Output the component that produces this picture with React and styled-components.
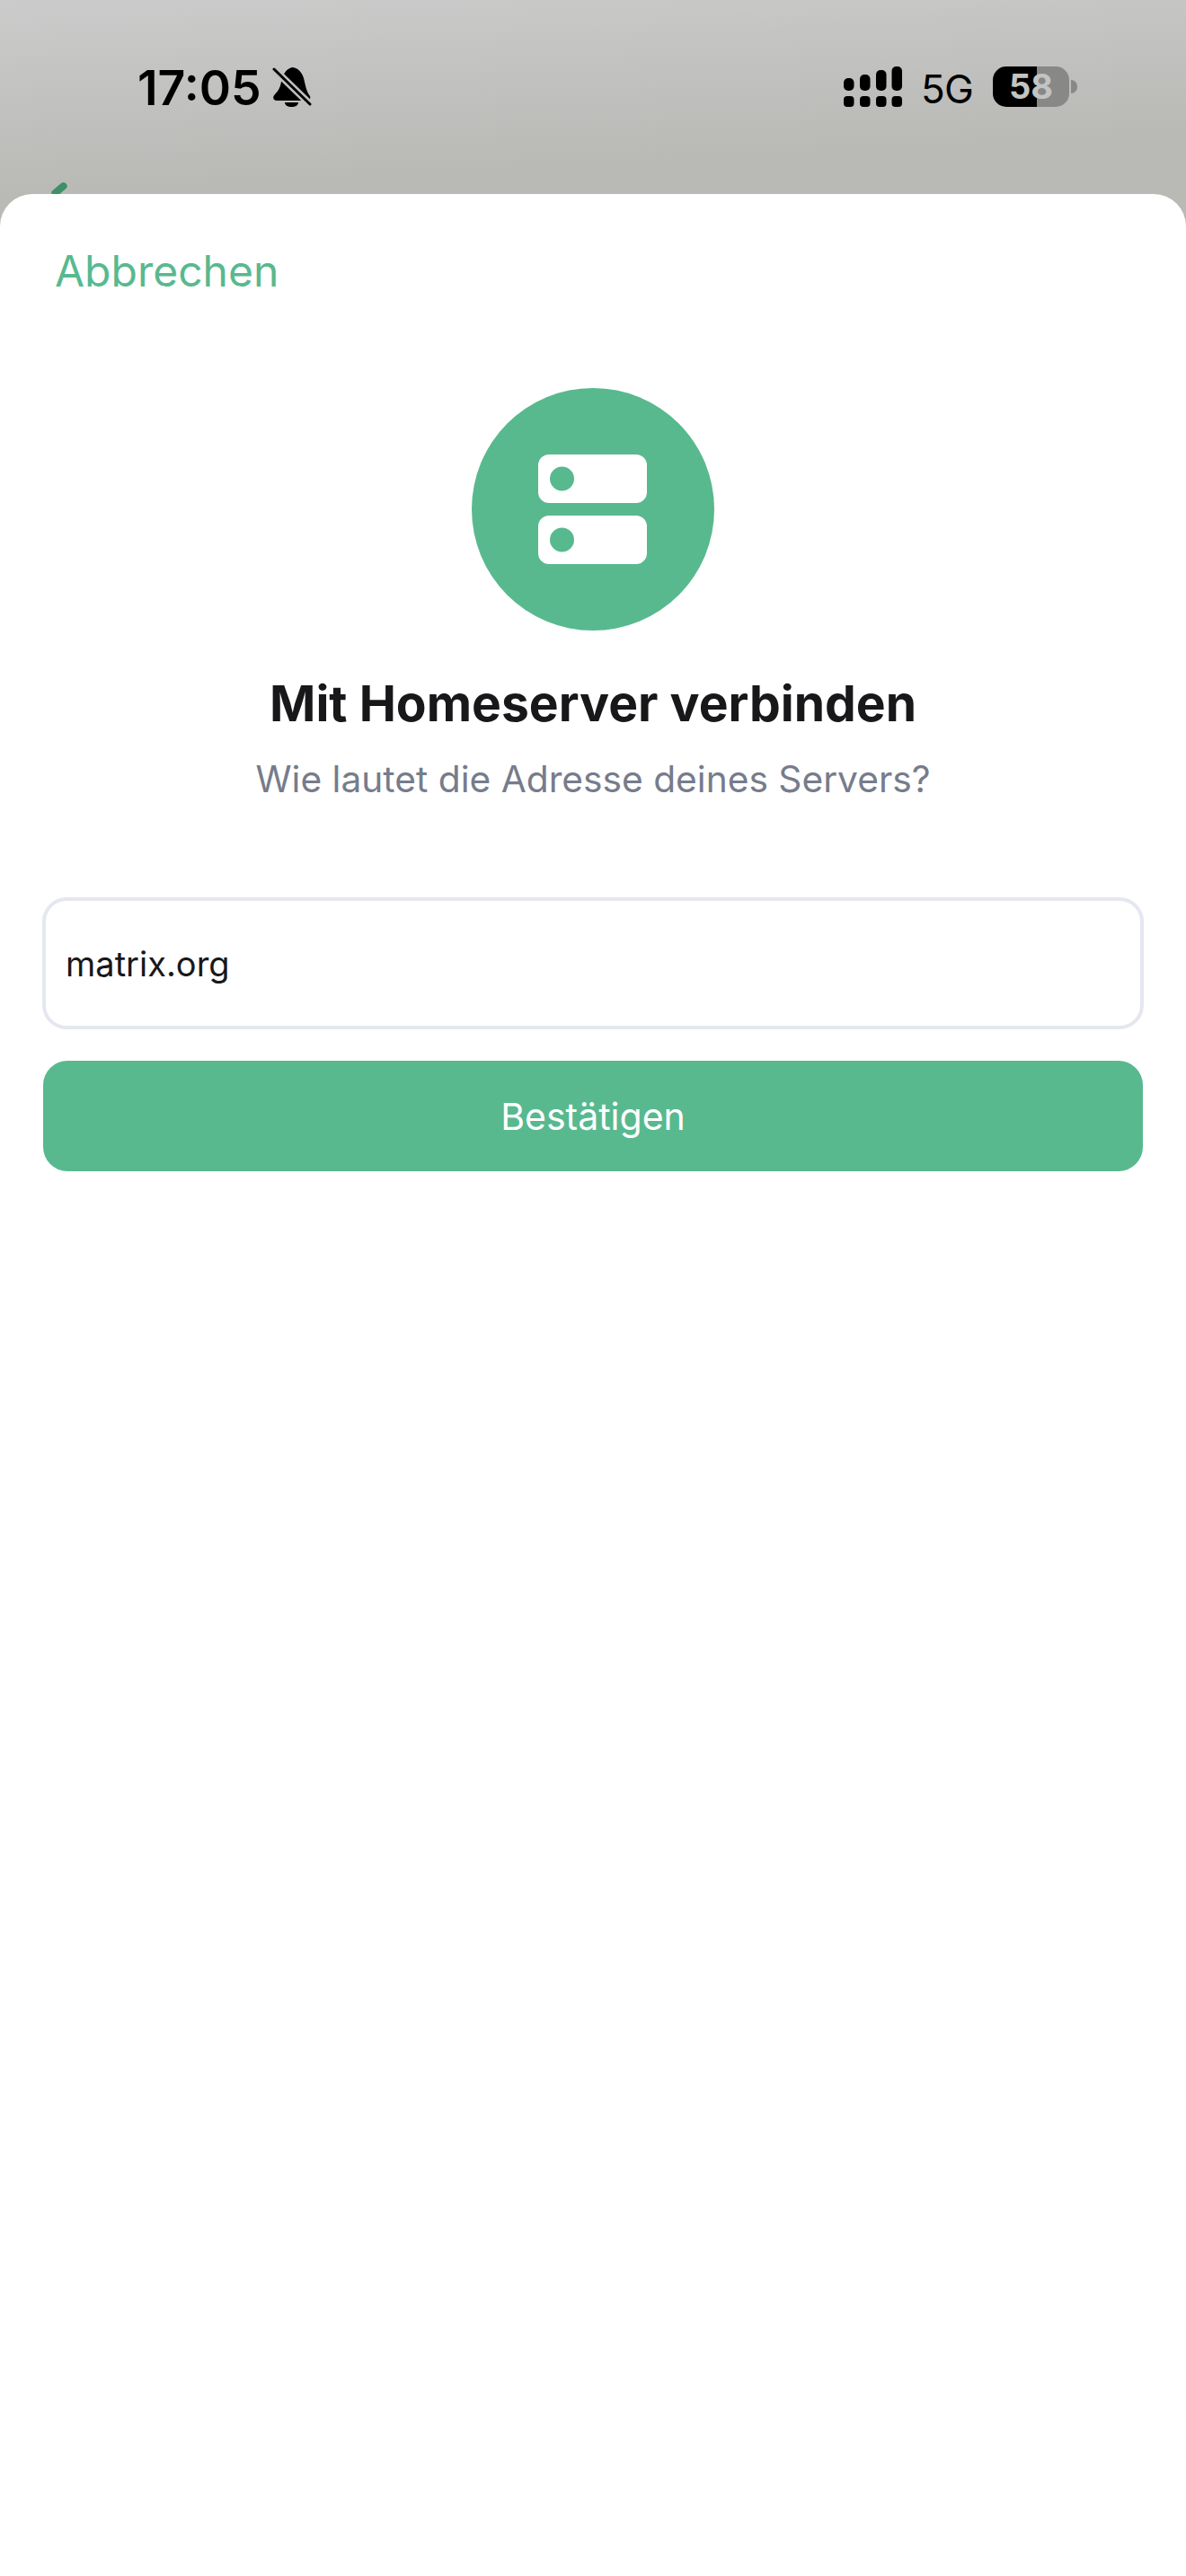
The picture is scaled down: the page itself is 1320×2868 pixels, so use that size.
import styled, { createGlobalStyle } from 'styled-components';

const GlobalStyle = createGlobalStyle`
    html, body {
        margin: 0;
        padding: 0;
        background: #fff;
    }

    * {
        box-sizing: border-box;
    }
`;

const Page = styled.div`
    height: 100vh;
    display: flex;
    flex-direction: column;
    overflow: hidden;
    font-family: Inter, "Liberation Sans", sans-serif;
    background: linear-gradient(177deg, #cbcbcb 0, #b9bab6 216px);
`;

const StatusBar = styled.header`
    position: relative;
    flex: 0 0 216px;
    height: 216px;
    padding: 74px 121px 0 153px;
    display: flex;
    align-items: flex-start;
    justify-content: space-between;
    overflow: hidden;
`;

const TimeGroup = styled.div`
    display: flex;
    align-items: flex-start;
    gap: 12px;
`;

const Time = styled.span`
    font-size: 53.5px;
    font-weight: 600;
    line-height: 48px;
    color: #000;
`;

const Indicators = styled.div`
    display: flex;
    align-items: flex-start;
`;

const Network = styled.span`
    margin: 3px 22px 0 21px;
    font-size: 44px;
    font-weight: 400;
    line-height: 44px;
    letter-spacing: -0.8px;
    color: #000;
`;

const Battery = styled.div`
    position: relative;
    width: 85px;
    height: 45px;
    border-radius: 15px;
    overflow: hidden;
    display: flex;
    align-items: center;
    justify-content: center;
    background: linear-gradient(90deg, #000 0 49px, #888887 49px);
`;

const BatteryLevel = styled.span`
    font-size: 38px;
    font-weight: 700;
    line-height: 45px;
    color: #c3c4c2;
`;

const BatteryCap = styled.span`
    width: 7px;
    height: 15px;
    margin: 15px 0 0 2px;
    border-radius: 0 8px 8px 0;
    background: #888887;
`;

const BackTick = styled.span`
    position: absolute;
    left: 56px;
    top: 207px;
    width: 20px;
    height: 8px;
    border-radius: 4px;
    transform: rotate(-40deg);
    background: #3f8f68;
`;

const Sheet = styled.main`
    flex: 1;
    display: flex;
    flex-direction: column;
    padding: 0 47px;
    background: #fff;
    border-radius: 36px 36px 0 0;
`;

const CancelLink = styled.a`
    align-self: flex-start;
    margin: 56px 0 0 14px;
    font-size: 48px;
    font-weight: 400;
    line-height: 60px;
    color: #58b98f;
`;

const Intro = styled.section`
    display: flex;
    flex-direction: column;
    align-items: center;
`;

const IconCircle = styled.div`
    width: 270px;
    height: 270px;
    margin-top: 100px;
    border-radius: 50%;
    display: flex;
    align-items: center;
    justify-content: center;
    background: #58b98f;
`;

const Title = styled.h1`
    margin: 47px 0 0;
    font-size: 55.2px;
    font-weight: 700;
    line-height: 68px;
    color: #18181b;
`;

const Subtitle = styled.p`
    margin: 26px 0 0;
    font-size: 40.7px;
    font-weight: 400;
    line-height: 50px;
    color: #767c8b;
`;

const ServerForm = styled.form`
    display: flex;
    flex-direction: column;
    align-items: stretch;
    gap: 35px;
    margin-top: 106px;
`;

const AddressInput = styled.input`
    height: 147px;
    padding: 0 22px;
    border: 4px solid #e5e7f0;
    border-radius: 27px;
    outline: none;
    background: #fff;
    font-family: inherit;
    font-size: 38px;
    color: #18181b;
`;

const SubmitButton = styled.button`
    height: 123px;
    margin: 0 1px;
    border: none;
    border-radius: 27px;
    background: #58b98f;
    font-family: inherit;
    font-size: 41px;
    font-weight: 400;
    color: #fff;
`;

const BellOff = () => (
    <svg width="44" height="46" viewBox="0 0 44 46">
        <path fill="#000" d="M22 1C28 1 33 6 35 13C37 21 38 28 42 33C43 36 41 38 39 38L5 38C1 38 0 34 3 31C7 27 9 23 10 17C11 10 15 3 22 1Z" />
        <path fill="#000" d="M14 40L29 40C29 43 26 45 21.500 45C17 45 14 43 14 40Z" />
        <path stroke="#c1c1bf" strokeWidth="8" d="M2 3L42 42" />
        <path stroke="#000" strokeWidth="3" strokeLinecap="round" d="M2 3L42 42" />
    </svg>
);

const SignalBars = () => (
    <svg width="65" height="46" viewBox="0 0 65 46" fill="#000">
        <rect x="0" y="13" width="11.500" height="14" rx="5" />
        <rect x="18" y="9" width="11.500" height="18" rx="5" />
        <rect x="36" y="4" width="11.500" height="23" rx="5" />
        <rect x="53.500" y="0" width="11.500" height="27" rx="5" />
        <rect x="0" y="33" width="11.500" height="12" rx="4" />
        <rect x="18" y="33" width="11.500" height="12" rx="4" />
        <rect x="36" y="33" width="11.500" height="12" rx="4" />
        <rect x="53.500" y="33" width="11.500" height="12" rx="4" />
    </svg>
);

const ServerIcon = () => (
    <svg width="122" height="122" viewBox="0 0 122 122">
        <path
            fill="#fff"
            fillRule="evenodd"
            d="M12 0H109A12 12 0 0 1 121 12V42A12 12 0 0 1 109 54H12A12 12 0 0 1 0 42V12A12 12 0 0 1 12 0ZM26.500 13.500A13.500 13.500 0 1 0 26.500 40.500A13.500 13.500 0 1 0 26.500 13.500Z"
        />
        <path
            fill="#fff"
            fillRule="evenodd"
            d="M12 68H109A12 12 0 0 1 121 80V110A12 12 0 0 1 109 122H12A12 12 0 0 1 0 110V80A12 12 0 0 1 12 68ZM26.500 81.500A13.500 13.500 0 1 0 26.500 108.500A13.500 13.500 0 1 0 26.500 81.500Z"
        />
    </svg>
);

const App = () => {
    return (
        <Page>
            <GlobalStyle />
            <StatusBar>
                <TimeGroup>
                    <Time>17:05</Time>
                    <BellOff />
                </TimeGroup>
                <Indicators>
                    <SignalBars />
                    <Network>5G</Network>
                    <Battery>
                        <BatteryLevel>58</BatteryLevel>
                    </Battery>
                    <BatteryCap />
                </Indicators>
                <BackTick />
            </StatusBar>
            <Sheet>
                <CancelLink>Abbrechen</CancelLink>
                <Intro>
                    <IconCircle>
                        <ServerIcon />
                    </IconCircle>
                    <Title>Mit Homeserver verbinden</Title>
                    <Subtitle>Wie lautet die Adresse deines Servers?</Subtitle>
                </Intro>
                <ServerForm>
                    <AddressInput readOnly value="matrix.org" />
                    <SubmitButton type="button">Bestätigen</SubmitButton>
                </ServerForm>
            </Sheet>
        </Page>
    );
};

export default App;
